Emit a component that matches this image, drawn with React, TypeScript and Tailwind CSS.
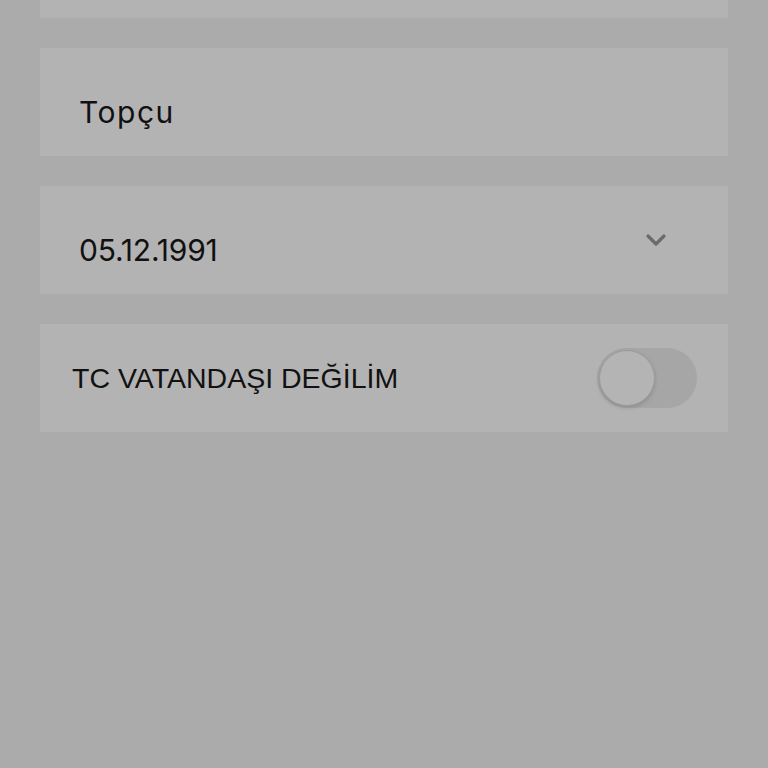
import { ChevronDown } from "lucide-react";

function Field({ children }: { children?: React.ReactNode }) {
  return (
    <div className="h-[108px] bg-[#b3b3b3] flex items-center pl-[39px] pr-[56px] pt-[20px]">
      {children}
    </div>
  );
}

export default function App() {
  return (
    <div className="w-[768px] h-[768px] bg-[#ababab] overflow-hidden">
      <div className="-mt-[90px] px-[40px] flex flex-col gap-[30px]">
        <Field />
        <Field>
          <span className="text-[30px] text-[#111] font-['Inter',sans-serif] tracking-[1.5px]">Topçu</span>
        </Field>
        <div className="h-[108px] bg-[#b3b3b3] flex items-center pl-[39px] pr-[56px]">
          <span className="pt-[20px] text-[30px] text-[#111] font-['Inter',sans-serif] tracking-[-0.2px]">
            05.12.1991
          </span>
          <ChevronDown className="ml-auto w-[32px] h-[32px] text-[#6b6b6b]" strokeWidth={2.4} />
        </div>
        <div className="h-[108px] bg-[#b3b3b3] flex items-center pl-[32px] pr-[31px]">
          <span className="text-[28.5px] text-[#111] font-['Liberation_Sans',sans-serif]">
            TC VATANDAŞI DEĞİLİM
          </span>
          <div className="ml-auto w-[100px] h-[60px] rounded-full bg-[#a6a6a6] p-[2px] flex items-center">
            <div className="w-[56px] h-[56px] rounded-full bg-[#b4b4b4] border border-[#9c9c9c] shadow-[0_2px_4px_rgba(0,0,0,0.15)]" />
          </div>
        </div>
      </div>
    </div>
  );
}
